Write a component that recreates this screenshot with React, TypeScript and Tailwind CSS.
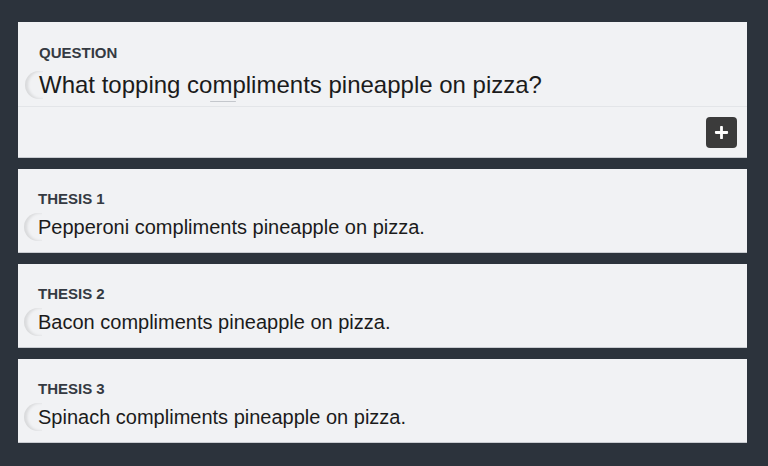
import { FaPlus } from 'react-icons/fa';

const theses = [
  'Pepperoni compliments pineapple on pizza.',
  'Bacon compliments pineapple on pizza.',
  'Spinach compliments pineapple on pizza.',
];

const Crescent = () => (
  <span className="pointer-events-none absolute left-[-14px] top-1/2 -translate-y-1/2 h-[28px] w-[18px] rounded-l-full shadow-[inset_3px_0_3px_rgba(0,0,0,0.10)]" />
);

const App = () => {
  return (
    <div
      className="min-h-screen bg-[#2c333c] pl-[18px] pr-[21px] pt-[22px] pb-6 flex flex-col gap-[11px]"
      style={{ fontFamily: '"Liberation Sans", Arial, sans-serif' }}
    >
      {/* Question */}
      <div className="bg-[#f1f2f4] border-b border-[#c9ccd1]">
        <div className="relative px-[21px] pt-[22px] pb-[7px] border-b border-[#e3e5e8]">
          <div className="text-[15px] leading-[18px] font-bold text-[#353a42]">QUESTION</div>
          <div className="relative mt-[9px] text-[24px] leading-[28px] text-[#1b1b1b]">
            <Crescent />
            What topping compliments pineapple on pizza?
          </div>
          <span className="absolute left-[192px] bottom-[4px] h-[1px] w-[26px] rounded-full bg-[#c4c7cc]" />
        </div>
        <div className="flex justify-end pr-[10px] pt-[10px] pb-[9px]">
          <button
            className="w-[31px] h-[31px] rounded-[4px] bg-[#3b3b3b] text-white flex items-center justify-center"
            aria-label="Add thesis"
          >
            <FaPlus className="text-[15px]" />
          </button>
        </div>
      </div>

      {/* Theses */}
      {theses.map((t, i) => (
        <div key={i} className="bg-[#f1f2f4] border-b border-[#c9ccd1] px-[20px] pt-[21px] pb-[13px]">
          <div className="text-[15px] leading-[18px] font-bold text-[#353a42]">THESIS {i + 1}</div>
          <div className="relative mt-[7px] text-[20px] leading-[24px] text-[#1b1b1b]">
            <Crescent />
            {t}
          </div>
        </div>
      ))}
    </div>
  );
};

export default App;
